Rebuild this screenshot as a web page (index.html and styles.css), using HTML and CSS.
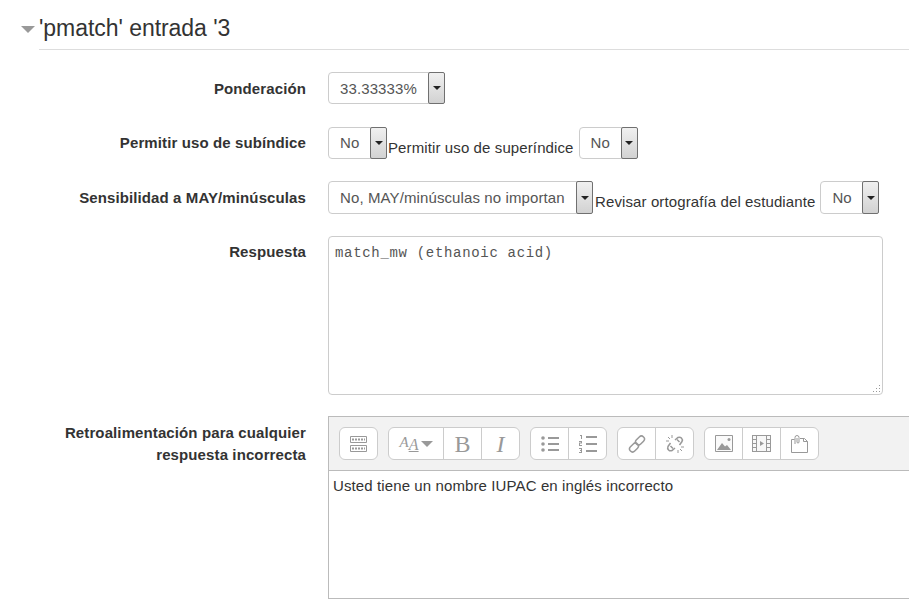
FILE: index.html
```html
<!DOCTYPE html>
<html lang="es">
<head>
<meta charset="utf-8">
<title>'pmatch' entrada '3</title>
<link rel="stylesheet" href="styles.css">
</head>
<body>
<section class="section">
  <header class="legend">
    <span class="caret"></span>
    <h2 class="title">'pmatch' entrada '3</h2>
  </header>
  <div class="row row-weight">
    <div class="label">Ponderación</div>
    <div class="controls">
      <div class="select w-117"><span class="select-text">33.33333%</span><span class="select-btn"><i></i></span></div>
    </div>
  </div>
  <div class="row row-sub">
    <div class="label">Permitir uso de subíndice</div>
    <div class="controls">
      <div class="select w-59"><span class="select-text">No</span><span class="select-btn"><i></i></span></div>
      <span class="inline-label">Permitir uso de superíndice</span>
      <div class="select w-59 sp-left"><span class="select-text">No</span><span class="select-btn"><i></i></span></div>
    </div>
  </div>
  <div class="row row-case">
    <div class="label">Sensibilidad a MAY/minúsculas</div>
    <div class="controls">
      <div class="select w-265"><span class="select-text">No, MAY/minúsculas no importan</span><span class="select-btn"><i></i></span></div>
      <span class="inline-label">Revisar ortografía del estudiante</span>
      <div class="select w-59 sp-left"><span class="select-text">No</span><span class="select-btn"><i></i></span></div>
    </div>
  </div>
  <div class="row row-answer">
    <div class="label label-answer">Respuesta</div>
    <div class="controls">
      <div class="textarea">match_mw (ethanoic acid)
        <svg class="grip" width="10" height="10" viewBox="0 0 10 10"><path d="M7 1h1v1H7zM7 4h1v1H7zM4 4h1v1H4zM7 7h1v1H7zM4 7h1v1H4zM1 7h1v1H1z" fill="#999"/></svg>
      </div>
    </div>
  </div>
  <div class="row row-feedback">
    <div class="label label-feedback">Retroalimentación para cualquier respuesta incorrecta</div>
    <div class="controls">
      <div class="editor">
        <div class="toolbar">
          <div class="group">
            <span class="tool"><svg width="17" height="16" viewBox="0 0 17 16" fill="none" stroke="#999"><path d="M.5.500h16v6H.5zM.5 9.500h16v6H.5z"/><path d="M2 3.500h13M2 12.500h13" stroke-width="2" stroke-dasharray="2 1"/></svg></span>
          </div>
          <div class="group">
            <span class="tool tool-font"><span class="font-a">A<span class="font-a2">A</span></span><span class="font-tri"></span></span>
            <span class="tool tool-b">B</span>
            <span class="tool tool-i">I</span>
          </div>
          <div class="group">
            <span class="tool"><svg width="18" height="16" viewBox="0 0 18 16" fill="#999"><circle cx="2" cy="2" r="1.800"/><circle cx="2" cy="8" r="1.800"/><circle cx="2" cy="14" r="1.800"/><path d="M7 1h11v2H7zM7 7h11v2H7zM7 13h11v2H7z"/></svg></span>
            <span class="tool"><svg width="18" height="18" viewBox="0 0 18 18" fill="#999"><path d="M7 1h11v2H7zM7 8h11v2H7zM7 15h11v2H7z"/><path d="M1 0h2v4H2V1H1zM0 6h3v2.500H1V10h2v1H0V7.500h2V7H0zM0 13h3v5H0v-1h2v-1H1v-1h1v-1H0z"/></svg></span>
          </div>
          <div class="group">
            <span class="tool"><svg width="20" height="20" viewBox="0 0 20 20" fill="none" stroke="#999" stroke-width="1.500"><rect x="10" y="1.500" width="6" height="10" rx="3" transform="rotate(45 13 6.500)"/><rect x="4" y="8.500" width="6" height="10" rx="3" transform="rotate(45 7 13.500)"/></svg></span>
            <span class="tool"><svg width="20" height="20" viewBox="0 0 20 20" fill="none" stroke="#999" stroke-width="1.500"><path d="M10 6l3-2.500a3 3 0 0 1 4 4L14.500 11M10 14l-3 2.500a3 3 0 0 1-4-4L5.500 9"/><path d="M12 5.500l2.500 2.500M5.500 12L8 14.500"/><path d="M7 1v3M1 7h3M13 19v-3M19 13h-3M3 3l2 2M17 17l-2-2" stroke-width="1"/></svg></span>
          </div>
          <div class="group">
            <span class="tool"><svg width="18" height="17" viewBox="0 0 18 17"><path d="M.5.500h17v16H.5z" fill="#fafafa" stroke="#999"/><path d="M2 15l5-7 3 3.500 2-1.500 4 5z" fill="#999"/><circle cx="14" cy="4.500" r="1.500" fill="#999"/></svg></span>
            <span class="tool"><svg width="19" height="17" viewBox="0 0 19 17"><path d="M0 0h19v17H0z" fill="#999"/><path d="M5 1h9v15H5zM1 1h3v3H1zM1 5h3v3H1zM1 9h3v3H1zM1 13h3v3H1zM15 1h3v3h-3zM15 5h3v3h-3zM15 9h3v3h-3zM15 13h3v3h-3z" fill="#f7f7f7"/><path d="M8 6l4 2.500L8 11z" fill="#999"/></svg></span>
            <span class="tool"><svg width="17" height="18" viewBox="0 0 17 18" fill="none" stroke="#999"><path d="M3.500 4.500h-3v13h16v-11l-3-3H9"/><path d="M12.500 3.500v3h4"/><path d="M4 9V2.500a2 2 0 0 1 4 0V7a1 1 0 0 1-2 0V3"/></svg></span>
          </div>
        </div>
        <div class="content">Usted tiene un nombre IUPAC en inglés incorrecto</div>
      </div>
    </div>
  </div>
</section>
</body>
</html>
```
FILE: styles.css
```css
html, body {
  margin: 0;
  padding: 0;
  background: #fff;
  overflow: hidden;
  height: 615px;
}
body {
  font-family: "Liberation Sans", Arial, sans-serif;
  font-size: 15px;
  letter-spacing: .11px;
  line-height: 20px;
  color: #333;
}
.section {
  padding-top: 13px;
}
.legend {
  display: flex;
  align-items: center;
  margin-left: 21px;
}
.caret {
  width: 0;
  height: 0;
  border-left: 7px solid transparent;
  border-right: 7px solid transparent;
  border-top: 7px solid #999;
  margin-right: 4px;
  margin-top: -4px;
}
.title {
  flex: 1;
  margin: 0;
  font-size: 23px;
  letter-spacing: -.05px;
  font-weight: 400;
  line-height: 30px;
  padding-bottom: 6px;
  border-bottom: 1px solid #ddd;
}
.row {
  display: flex;
}
.row-weight { margin-top: 22px; }
.row-sub { margin-top: 23px; }
.row-case { margin-top: 22px; }
.row-answer { margin-top: 22px; }
.row-feedback { margin-top: 21px; }
.label {
  width: 306px;
  flex: none;
  text-align: right;
  font-weight: 700;
  padding-top: 6px;
  box-sizing: border-box;
}
.row-weight .label, .row-case .label { padding-top: 7px; }
.label-answer { padding-top: 6px; }
.label-feedback { padding-top: 6px; padding-left: 50px; line-height: 22px; }
.controls {
  margin-left: 22px;
  display: flex;
  align-items: flex-end;
  flex: none;
}
.select {
  height: 32px;
  box-sizing: border-box;
  border: 1px solid #ccc;
  border-radius: 4px;
  display: flex;
  justify-content: space-between;
  background: #fff;
  color: #555;
  padding-left: 11px;
}
.row-case .select { height: 33px; }
.select-text { padding-top: 5px; }
.row-weight .select-text, .row-case .select-text { padding-top: 6px; }
.w-117 { width: 117px; }
.w-59 { width: 59px; }
.w-265 { width: 265px; }
.sp-left { margin-left: 5px; }
.select-btn {
  width: 17px;
  margin: -1px -1px -1px 0;
  box-sizing: border-box;
  border: 1px solid #707070;
  border-radius: 2px;
  background: linear-gradient(#f0f0f0, #d2d2d2);
  display: flex;
  align-items: center;
  justify-content: center;
}
.select-btn i {
  width: 0;
  height: 0;
  border-left: 4px solid transparent;
  border-right: 4px solid transparent;
  border-top: 4px solid #222;
}
.inline-label {
  color: #333;
  line-height: 20px;
  padding-bottom: 1px;
  margin-left: 1px;
}
.row-case .inline-label {
  padding-bottom: 2px;
  margin-left: 2px;
}
.textarea {
  position: relative;
  width: 555px;
  height: 159px;
  box-sizing: border-box;
  border: 1px solid #ccc;
  border-radius: 4px;
  padding: 6px;
  font-family: "Liberation Mono", monospace;
  font-size: 14px;
  letter-spacing: .68px;
  line-height: 20px;
  color: #555;
  white-space: pre-wrap;
}
.grip {
  position: absolute;
  right: 0;
  bottom: 0;
}
.editor {
  width: 640px;
  height: 183px;
  box-sizing: border-box;
  border: 1px solid #bbb;
}
.toolbar {
  display: flex;
  gap: 10px;
  height: 54px;
  box-sizing: border-box;
  padding: 10px 10px 0;
  background: #f2f2f2;
  border-bottom: 1px solid #bbb;
}
.group {
  display: flex;
  height: 33px;
  box-sizing: border-box;
  border: 1px solid #ccc;
  border-radius: 6px;
  background: #fff;
}
.tool {
  width: 38px;
  display: flex;
  align-items: center;
  justify-content: center;
  border-left: 1px solid #ccc;
  color: #999;
  box-sizing: border-box;
}
.tool:first-child { border-left: 0; width: 37px; }
.tool.tool-font { width: 54px; gap: 2px; }
.font-a {
  font-family: "Liberation Serif", serif;
  font-style: italic;
  font-size: 15px;
  line-height: 18px;
  position: relative;
  top: -2px;
}
.font-a2 {
  font-size: 16px;
  text-decoration: underline;
  position: relative;
  top: 3px;
}
.font-tri {
  width: 0;
  height: 0;
  border-left: 6px solid transparent;
  border-right: 6px solid transparent;
  border-top: 6px solid #999;
}
.tool-b, .tool-i {
  font-family: "Liberation Serif", serif;
  font-size: 24px;
}
.tool-i { font-style: italic; }
.content {
  padding: 5px 4px;
  color: #333;
}
```
